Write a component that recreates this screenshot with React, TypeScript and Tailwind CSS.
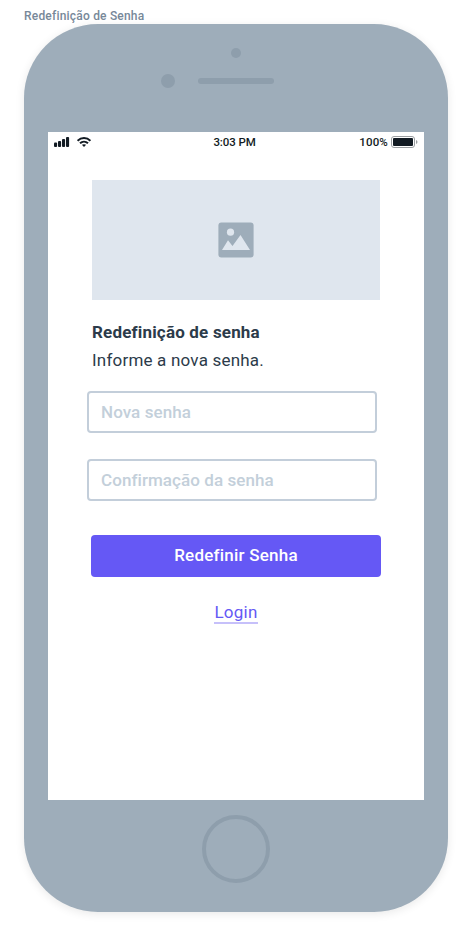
import React from "react";

function StatusBar() {
  return (
    <div className="grid h-5 grid-cols-3 items-center pl-1.5 pr-1.5 text-[12px] font-medium leading-5 text-[#121b23]">
      <div className="flex items-center gap-[7px]">
        <svg width="16" height="10" viewBox="0 0 16 10" fill="#121b23">
          <rect x="0" y="5.5" width="3.1" height="4.5" rx="1" />
          <rect x="4" y="4" width="3.1" height="6" rx="1" />
          <rect x="8" y="2" width="3.1" height="8" rx="1" />
          <rect x="12" y="0" width="3.1" height="10" rx="1" />
        </svg>
        <svg width="14" height="10" viewBox="0 0 14 10" fill="none" stroke="#121b23" strokeWidth="2">
          <path d="M0.6 3.8C4.2 0.2 9.8 0.2 13.4 3.8" />
          <path d="M3 6.3C5.3 4.2 8.7 4.2 11 6.3" />
          <path d="M4.9 7.8C6.1 6.9 7.9 6.9 9.1 7.8L7 9.9Z" fill="#121b23" stroke="none" />
        </svg>
      </div>
      <div className="whitespace-nowrap pr-[3px] text-center text-[11.5px] tracking-[-0.1px]">3:03 PM</div>
      <div className="flex items-center justify-end gap-[3px]">
        <span className="text-[11.5px] tracking-[0.15px]">100%</span>
        <svg width="27" height="12" viewBox="0 0 27 12">
          <rect x="0.5" y="0.5" width="23" height="11" rx="2.5" fill="none" stroke="#9b9fa2" />
          <rect x="2" y="2" width="20" height="8" rx="1" fill="#121b23" />
          <path d="M25 4C27 4.7 27 7.3 25 8Z" fill="#9b9fa2" />
        </svg>
      </div>
    </div>
  );
}

function ImagePlaceholder() {
  return (
    <div className="mx-auto mt-7 flex h-[120px] w-72 items-center justify-center bg-[#dfe6ee]">
      <svg width="36" height="36" viewBox="0 0 36 36">
        <rect x="0.4" y="0.4" width="35.2" height="35.2" rx="3" fill="#9eadba" />
        <circle cx="12.5" cy="10.2" r="3.6" fill="#dfe6ee" />
        <path d="M4 28L10 18.3L14.5 24L22.5 13L32 28Z" fill="#dfe6ee" />
      </svg>
    </div>
  );
}

function Field({ label }: { label: string }) {
  return (
    <input
      aria-label={label}
      placeholder={label}
      className="block h-[42px] w-[290px] rounded border-2 border-[#c3ceda] bg-white px-3 text-[17px] font-medium tracking-[0.07px] text-[#2c3b4a] outline-none placeholder:text-[#c3cfda] placeholder:opacity-100"
    />
  );
}

export default function App() {
  return (
    <div className="h-[936px] w-[472px] overflow-hidden bg-white px-6 font-['Roboto','Liberation_Sans',sans-serif]">
      <div className="h-6 whitespace-nowrap pt-2 text-[12px] font-medium leading-[17px] tracking-[0.2px] text-[#778899]">
        Redefinição de Senha
      </div>
      <div className="flex h-[888px] w-[424px] flex-col rounded-[74px] bg-[#9eadba] px-6 shadow-[0_2px_10px_rgba(0,0,0,0.09)]">
        <div className="flex h-[108px] shrink-0 flex-col items-center pt-6">
          <div className="h-2.5 w-2.5 rounded-full bg-[#8e9eac]" />
          <div className="mt-4 flex w-[150px] items-center gap-[23px] self-start pl-[113px]">
            <div className="h-3.5 w-3.5 shrink-0 rounded-full bg-[#8e9eac]" />
            <div className="h-1.5 w-[76px] shrink-0 rounded-full bg-[#8e9eac]" />
          </div>
        </div>
        <main className="h-[668px] shrink-0 bg-white">
          <StatusBar />
          <ImagePlaceholder />
          <div className="ml-11 mt-[18px] whitespace-nowrap text-[17px] leading-7 text-[#2c3b4a]">
            <h1 className="font-bold tracking-[0.18px]">Redefinição de senha</h1>
            <p className="tracking-[0.2px]">Informe a nova senha.</p>
          </div>
          <form className="ml-[39px] mt-[17px]">
            <Field label="Nova senha" />
            <div className="h-[26px]" />
            <Field label="Confirmação da senha" />
            <button
              type="button"
              className="ml-1 mt-[34px] block h-[42px] w-[290px] rounded bg-[#6558f5] text-[17px] font-medium tracking-[0.22px] text-white"
            >
              Redefinir Senha
            </button>
          </form>
          <div className="mt-[23px] flex justify-center">
            <a href="#" className="h-6 border-b-2 border-[#c6c0fa] text-[17px] leading-6 tracking-[0.25px] text-[#6558f5]">
              Login
            </a>
          </div>
        </main>
        <div className="mt-[15px] h-[68px] w-[68px] shrink-0 self-center rounded-full border-4 border-[#8e9eac]" />
      </div>
    </div>
  );
}
